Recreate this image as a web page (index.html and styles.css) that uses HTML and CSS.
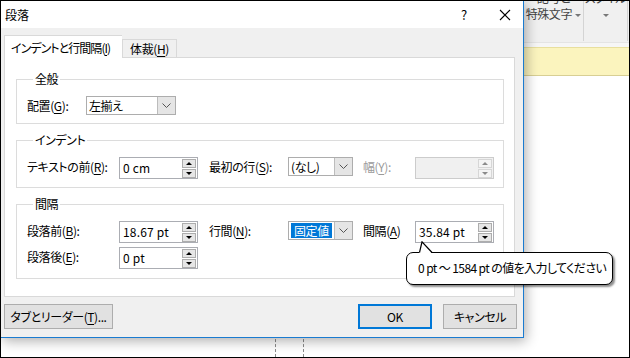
FILE: index.html
```html
<!DOCTYPE html>
<html lang="ja">
<head>
    <meta charset="UTF-8">
    <title>段落</title>
    <link rel="stylesheet" href="styles.css">
</head>
<body>
<div class="screen">
    <div class="app">
        <div class="ribbon">
            <div class="rgroup rg-symbol">
                <span class="rline">記号と</span>
                <span class="rline">特殊文字 <i class="caret"></i></span>
            </div>
            <div class="rgroup rg-style">
                <span class="rline">スタイル</span>
                <span class="rline"><i class="caret"></i></span>
            </div>
        </div>
        <div class="ribbon-gap"></div>
        <div class="msgbar"></div>
        <div class="doc"><div class="guides"></div></div>
    </div>

    <div class="dialog">
        <div class="titlebar">
            <span class="title">段落</span>
            <span class="help">?</span>
            <span class="close">
                <svg width="12" height="12" viewBox="0 0 12 12"><path d="M1 1L11 11M11 1L1 11" stroke="#000" stroke-width="1.1" fill="none"/></svg>
            </span>
        </div>

        <div class="dbody">
            <div class="tabs">
                <div class="tab active">インデントと行間隔(<u>I</u>)</div>
                <div class="tab">体裁(<u>H</u>)</div>
            </div>

            <div class="panel">
                <fieldset class="group">
                    <legend>全般</legend>
                    <div class="row">
                        <span class="lbl lbl-align">配置(<u>G</u>):</span>
                        <div class="combo combo-align">
                            <span class="cval">左揃え</span>
                            <span class="cbtn"><svg width="9" height="5" viewBox="0 0 9 5"><path d="M0.5 0.5L4.5 4.5L8.5 0.5" stroke="#555" fill="none"/></svg></span>
                        </div>
                    </div>
                </fieldset>

                <fieldset class="group">
                    <legend>インデント</legend>
                    <div class="row">
                        <span class="lbl lbl-first">テキストの前(<u>R</u>):</span>
                        <div class="spin">
                            <span class="sval">0 cm</span>
                            <span class="sbtns"><span class="sbtn up"></span><span class="sbtn down"></span></span>
                        </div>
                        <span class="lbl lbl-mid">最初の行(<u>S</u>):</span>
                        <div class="combo">
                            <span class="cval">(なし)</span>
                            <span class="cbtn"><svg width="9" height="5" viewBox="0 0 9 5"><path d="M0.5 0.5L4.5 4.5L8.5 0.5" stroke="#555" fill="none"/></svg></span>
                        </div>
                        <span class="lbl lbl-last disabled">幅(<u>Y</u>):</span>
                        <div class="spin spin-off">
                            <span class="sval"></span>
                            <span class="sbtns"><span class="sbtn up"></span><span class="sbtn down"></span></span>
                        </div>
                    </div>
                </fieldset>

                <fieldset class="group">
                    <legend>間隔</legend>
                    <div class="row">
                        <span class="lbl lbl-first">段落前(<u>B</u>):</span>
                        <div class="spin">
                            <span class="sval">18.67 pt</span>
                            <span class="sbtns"><span class="sbtn up"></span><span class="sbtn down"></span></span>
                        </div>
                        <span class="lbl lbl-mid">行間(<u>N</u>):</span>
                        <div class="combo">
                            <span class="cval"><span class="selected">固定値</span></span>
                            <span class="cbtn"><svg width="9" height="5" viewBox="0 0 9 5"><path d="M0.5 0.5L4.5 4.5L8.5 0.5" stroke="#555" fill="none"/></svg></span>
                        </div>
                        <span class="lbl lbl-last">間隔(<u>A</u>)</span>
                        <div class="spin">
                            <span class="sval">35.84 pt</span>
                            <span class="sbtns"><span class="sbtn up"></span><span class="sbtn down"></span></span>
                        </div>
                    </div>
                    <div class="row row-next">
                        <span class="lbl lbl-first">段落後(<u>E</u>):</span>
                        <div class="spin">
                            <span class="sval">0 pt</span>
                            <span class="sbtns"><span class="sbtn up"></span><span class="sbtn down"></span></span>
                        </div>
                    </div>
                </fieldset>
            </div>

            <div class="buttons">
                <button class="btn btn-tabs">タブとリーダー(<u>T</u>)...</button>
                <button class="btn btn-ok">OK</button>
                <button class="btn">キャンセル</button>
            </div>
        </div>
    </div>

    <div class="tip">
        <svg class="tip-tail" width="16" height="13" viewBox="0 0 16 13">
            <polygon points="4,0.5 1,12.5 14,12.5" fill="#fff"/>
            <polyline points="1.5,11.5 4,0.8 14,11.5" fill="none" stroke="#000" stroke-width="1.2"/>
        </svg>
        0 pt ～ 1584 pt の値を入力してください
    </div>
</div>
</body>
</html>
```

FILE: styles.css
```css
* { box-sizing: border-box; }
body { margin: 0; font-family: "Noto Sans CJK JP", "Noto Sans", sans-serif; font-size: 12px; line-height: 16px; color: #000; font-feature-settings: "palt"; letter-spacing: -0.4px; }
u { text-decoration: underline; text-underline-offset: 2px; }

.screen { position: relative; width: 630px; height: 358px; border: 1px solid #000; overflow: hidden; background: #fff; }

/* window behind the dialog */
.app { display: flex; flex-direction: column; height: 100%; }
.ribbon { height: 42px; background: #f0f0f0; display: flex; justify-content: flex-end; border-bottom: 1px solid #e4e4e4; }
.rgroup { display: flex; flex-direction: column; align-items: center; margin-top: -11px; border-right: 1px solid #d4d4d4; height: 51px; color: #444; }
.rg-symbol { width: 60px; }
.rg-style { width: 44px; margin-right: 1px; }
.rline { height: 16px; white-space: nowrap; }
.caret { display: inline-block; width: 0; height: 0; border-left: 3px solid transparent; border-right: 3px solid transparent; border-top: 3px solid #777; vertical-align: middle; margin-left: 1px; }
.ribbon-gap { height: 4px; background: #f6f6f6; }
.msgbar { height: 29px; background: #fbf4be; border-top: 1px solid #e8df9e; border-bottom: 1px solid #d8cf94; }
.doc { flex: 1; background: #fff; }
.guides { margin-left: 274px; width: 29px; height: 100%; border-left: 1px dashed #8a8a8a; border-right: 1px dashed #8a8a8a; }

/* dialog */
.dialog { position: absolute; left: 0; top: 0; width: 523px; height: 337px; background: #f0f0f0; border-right: 1px solid #1a7bd0; border-bottom: 1px solid #1a7bd0; box-shadow: 2px 3px 12px rgba(0, 0, 0, 0.32); display: flex; flex-direction: column; }
.titlebar { height: 27px; background: #fff; display: flex; align-items: center; padding-left: 4px; }
.title { flex: 1; letter-spacing: 0; }
.help { width: 10px; margin-right: 30px; text-align: center; font-size: 13px; }
.close { width: 12px; height: 12px; margin-right: 12px; display: flex; }

.dbody { padding: 7px 6px 0 3px; }
.tabs { display: flex; align-items: flex-end; position: relative; z-index: 1; }
.tab { height: 18px; padding: 0 6px; border: 1px solid #d9d9d9; border-bottom: none; background: #f0f0f0; line-height: 17px; width: 55px; text-align: center; white-space: nowrap; }
.tab.active { height: 23px; width: 118px; background: #fff; margin-bottom: -1px; padding: 3px 0 0 6px; text-align: left; border-right: none; letter-spacing: -0.95px; }

.panel { width: 511px; background: #fff; border: 1px solid #d9d9d9; padding: 13px 10px 17px 11px; }
.group { margin: 0 0 8px; padding: 9px 0 8px 10px; border: 1px solid #dcdcdc; }
.group:last-child { margin-bottom: 0; padding-bottom: 9px; }
.group legend { margin-left: 6px; padding: 0 2px; line-height: 16px; }

.row { display: flex; align-items: flex-start; }
.row-next { margin-top: 4px; }
.lbl { line-height: 19px; white-space: nowrap; }
.lbl-align { width: 59px; }
.lbl-first { width: 92px; line-height: 20px; }
.lbl-mid { width: 79px; margin-left: 11px; line-height: 20px; }
.lbl-last { width: 52px; margin-left: 10px; line-height: 20px; }
.disabled { color: #9a9a9a; }

.combo { width: 65px; height: 19px; border: 1px solid #adadad; display: flex; background: #fff; }
.combo-align { width: 90px; }
.cval { flex: 1; padding: 1px 2px 0 2px; line-height: 15px; white-space: nowrap; }
.selected { display: inline-block; background: #0078d7; color: #fff; padding: 0 3px; line-height: 15px; }
.cbtn { width: 18px; background: #e5e5e5; border-left: 1px solid #bcbcbc; display: flex; align-items: center; justify-content: center; }

.spin { width: 79px; height: 22px; border: 1px solid #abadb3; display: flex; align-items: center; padding: 0 1px 0 3px; background: #fff; }
.spin-off { background: #f0f0f0; border-color: #cccccc; }
.sval { flex: 1; white-space: nowrap; letter-spacing: 0.2px; }
.sbtns { display: flex; flex-direction: column; gap: 1px; }
.sbtn { width: 14px; height: 9px; background: #e6e6e6; border: 1px solid #adadad; display: flex; align-items: center; justify-content: center; }
.sbtn::after { content: ""; width: 0; height: 0; border-left: 3px solid transparent; border-right: 3px solid transparent; }
.sbtn.up::after { border-bottom: 3px solid #000; }
.sbtn.down::after { border-top: 3px solid #000; }
.spin-off .sbtn { background: #f4f4f4; border-color: #d6d6d6; }
.spin-off .sbtn.up::after { border-bottom-color: #8a8a8a; }
.spin-off .sbtn.down::after { border-top-color: #8a8a8a; }

.buttons { display: flex; margin-top: 7px; gap: 11px; }
.btn { height: 25px; width: 74px; border: 1px solid #adadad; background: #e1e1e1; font: inherit; font-feature-settings: "palt"; letter-spacing: -0.4px; color: #000; padding: 0; }
.btn-tabs { width: 109px; margin-right: auto; }
.btn-ok { border: 2px solid #0078d7; }

/* tooltip over the dialog */
.tip { position: absolute; left: 405px; top: 251px; width: 207px; height: 33px; background: #fff; border: 1.3px solid #000; border-radius: 7px; box-shadow: 2px 2px 2px rgba(0, 0, 0, 0.45); padding: 7px 0 0 11px; white-space: nowrap; letter-spacing: -0.6px; }
.tip-tail { position: absolute; left: 11px; top: -12px; }
```
